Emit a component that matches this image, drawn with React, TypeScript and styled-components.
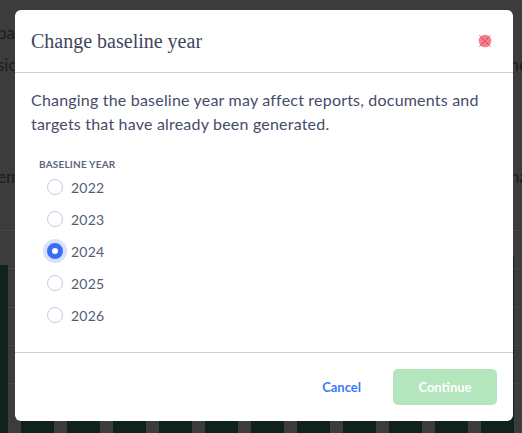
import React, { useState } from "react";
import styled, { createGlobalStyle } from "styled-components";

const Global = createGlobalStyle`
  html, body { margin: 0; padding: 0; }
  body { width: 522px; height: 433px; overflow: hidden; background: #3c3c3c; }
  * { box-sizing: border-box; }
`;

const Page = styled.div`
  position: relative;
  width: 522px;
  height: 433px;
  overflow: hidden;
  background: #3c3c3c;
  font-family: "Lato", "Noto Sans", sans-serif;
`;

const BehindText = styled.div<{ $h: number; $gap?: number }>`
  display: flex;
  justify-content: space-between;
  height: ${(p) => p.$h}px;
  margin-top: ${(p) => p.$gap ?? 0}px;
  align-items: center;
  font-size: 17px;
  color: #1c1c1c;
  margin-left: -3px;
  margin-right: -6px;
  white-space: nowrap;
`;

const BehindTop = styled.div`
  padding-top: 21px;
  display: flex;
  flex-direction: column;
`;

const Chart = styled.div`
  position: relative;
  margin-top: 34px;
  height: 260px;
`;

const GridLines = styled.div`
  display: flex;
  flex-direction: column;
  gap: 37.25px;
`;

const GridLine = styled.div`
  height: 1px;
  background: #474747;
`;

const Bars = styled.div`
  position: absolute;
  left: -25px;
  right: 0;
  bottom: 0;
  top: 0;
  display: flex;
  align-items: flex-end;
  gap: 13px;
`;

const Bar = styled.div<{ $h: number }>`
  width: 33px;
  flex: none;
  height: ${(p) => p.$h}px;
  background: #10231a;
  border-radius: 2px 2px 0 0;
`;

const Modal = styled.div`
  position: absolute;
  left: 15px;
  top: 10px;
  width: 498px;
  height: 411px;
  background: #ffffff;
  border-radius: 6px;
  display: flex;
  flex-direction: column;
  font-family: "Lato", "Noto Sans", sans-serif;
`;

const Header = styled.div`
  height: 63px;
  border-bottom: 1px solid #cdd1e2;
  display: flex;
  align-items: center;
  justify-content: space-between;
  padding: 0 20px 0 16px;
`;

const Title = styled.h2`
  margin: 0;
  font-family: "Liberation Serif", "Times New Roman", serif;
  font-weight: 400;
  font-size: 20px;
  color: #3e4660;
  padding-top: 1px;
`;

const CloseButton = styled.button`
  border: 0;
  background: none;
  padding: 0;
  width: 16px;
  height: 16px;
  display: flex;
  align-items: center;
  justify-content: center;
  cursor: pointer;
`;

const Body = styled.div`
  flex: 1;
  padding: 15px 16px 0 16px;
  border-bottom: 1px solid #cdd1e2;
`;

const Paragraph = styled.p`
  margin: 0;
  font-size: 16px;
  line-height: 24px;
  color: #454c69;
  letter-spacing: 0.2px;
`;

const Label = styled.div`
  margin-top: 21px;
  margin-left: 8px;
  font-size: 10px;
  font-weight: 700;
  letter-spacing: 0.2px;
  color: #5c6381;
  text-transform: uppercase;
  line-height: 14px;
`;

const Options = styled.div`
  display: flex;
  flex-direction: column;
`;

const Option = styled.label`
  display: flex;
  align-items: center;
  height: 32px;
  gap: 8px;
  padding-left: 16px;
  cursor: pointer;
`;

const Radio = styled.span<{ $checked: boolean }>`
  width: 16px;
  height: 16px;
  border-radius: 50%;
  flex: none;
  border: ${(p) => (p.$checked ? "5px solid #3c6ef5" : "1px solid #c9cce0")};
  background: #ffffff;
  box-shadow: ${(p) => (p.$checked ? "0 0 0 4px #d8e2fd" : "none")};
`;

const OptionText = styled.span`
  font-size: 14px;
  color: #545b77;
  letter-spacing: 0.2px;
`;

const Footer = styled.div`
  height: 68px;
  display: flex;
  align-items: center;
  justify-content: flex-end;
  gap: 32px;
  padding: 0 16px 0 0;
`;

const TextButton = styled.button`
  border: 0;
  background: none;
  font-family: inherit;
  font-size: 13px;
  font-weight: 700;
  color: #3d7af8;
  padding: 0;
  cursor: pointer;
`;

const PrimaryButton = styled.button<{ $disabled: boolean }>`
  width: 104px;
  height: 36px;
  border: 0;
  border-radius: 5px;
  background: ${(p) => (p.$disabled ? "#b3e6bd" : "#3cb55a")};
  color: #ffffff;
  font-family: inherit;
  font-size: 13px;
  font-weight: 700;
  cursor: pointer;
`;

const CloseIcon = () => (
  <svg width="16" height="16" viewBox="0 0 16 16">
    <circle cx="8" cy="8" r="6.3" fill="#ff7a8a" />
    <path d="M2.5 2.5 L13.5 13.5 M13.5 2.5 L2.5 13.5" stroke="#6d5a60" strokeWidth="1" strokeDasharray="1.2 0.6" />
  </svg>
);

const years = [2022, 2023, 2024, 2025, 2026];
const barHeights = [225, 240, 250, 230, 245, 238, 250, 244, 236, 248, 242, 235];

export default function App() {
  const [year, setYear] = useState(2024);
  return (
    <Page>
      <Global />
      <BehindTop>
        <BehindText $h={22}>
          <span>pat</span>
          <span></span>
        </BehindText>
        <BehindText $h={42}>
          <span>sic</span>
          <span>ne</span>
        </BehindText>
        <BehindText $h={40} $gap={71}>
          <span>em</span>
          <span>na</span>
        </BehindText>
      </BehindTop>
      <Chart>
        <GridLines>
          {[0, 1, 2, 3, 4].map((i) => (
            <GridLine key={i} />
          ))}
        </GridLines>
        <Bars>
          {barHeights.map((h, i) => (
            <Bar key={i} $h={h} />
          ))}
        </Bars>
      </Chart>
      <Modal role="dialog">
        <Header>
          <Title>Change baseline year</Title>
          <CloseButton aria-label="Close">
            <CloseIcon />
          </CloseButton>
        </Header>
        <Body>
          <Paragraph>
            Changing the baseline year may affect reports, documents and targets that have already been generated.
          </Paragraph>
          <Label>Baseline year</Label>
          <Options>
            {years.map((y) => (
              <Option key={y} onClick={() => setYear(y)}>
                <Radio $checked={y === year} />
                <OptionText>{y}</OptionText>
              </Option>
            ))}
          </Options>
        </Body>
        <Footer>
          <TextButton>Cancel</TextButton>
          <PrimaryButton $disabled>Continue</PrimaryButton>
        </Footer>
      </Modal>
    </Page>
  );
}
